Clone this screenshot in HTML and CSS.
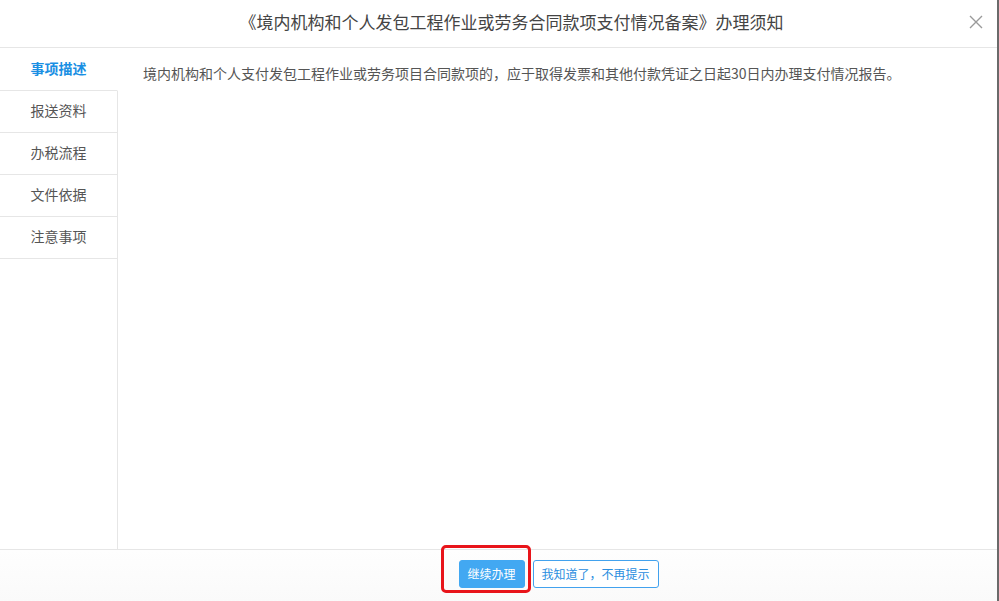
FILE: index.html
```html
<!DOCTYPE html>
<html lang="zh-CN">
<head>
<meta charset="utf-8">
<title>办理须知</title>
<link rel="stylesheet" href="styles.css">
</head>
<body>
<div class="modal">
  <div class="header">
    <div class="title">《境内机构和个人发包工程作业或劳务合同款项支付情况备案》办理须知</div>
    <span class="close" aria-label="关闭">
      <svg width="14" height="14" viewBox="0 0 14 14"><path d="M1 1L13 13M13 1L1 13" stroke="#9a9a9a" stroke-width="1.4" fill="none"/></svg>
    </span>
  </div>
  <div class="body">
    <div class="sidebar">
      <div class="tab active">事项描述</div>
      <div class="tab">报送资料</div>
      <div class="tab">办税流程</div>
      <div class="tab">文件依据</div>
      <div class="tab">注意事项</div>
      <div class="filler"></div>
    </div>
    <div class="content">境内机构和个人支付发包工程作业或劳务项目合同款项的，应于取得发票和其他付款凭证之日起30日内办理支付情况报告。</div>
  </div>
  <div class="footer">
    <div class="actions">
      <button class="btn primary">继续办理</button>
      <button class="btn outline">我知道了，不再提示</button>
      <span class="highlight"></span>
    </div>
  </div>
</div>
</body>
</html>
```

FILE: styles.css
```css
* { box-sizing: border-box; }
html, body { margin: 0; padding: 0; background: #fff; }
body {
  font-family: "Noto Sans CJK SC", "Noto Sans", sans-serif;
  color: #555;
}
.modal {
  width: 999px;
  height: 601px;
  display: flex;
  flex-direction: column;
  border-right: 2px solid #6a6a6a;
  background: #fff;
}
.header {
  height: 48px;
  border-bottom: 1px solid #e6e6e6;
  display: flex;
  align-items: center;
  justify-content: center;
  position: relative;
  padding-left: 26px;
  padding-bottom: 4px;
}
.title {
  font-size: 17px;
  color: #444;
  line-height: 22px;
}
.close {
  position: absolute;
  right: 14px;
  top: 15px;
  width: 14px;
  height: 14px;
  display: block;
}
.close svg { display: block; }
.body {
  flex: 1;
  display: flex;
  min-height: 0;
}
.sidebar {
  width: 118px;
  display: flex;
  flex-direction: column;
  padding-top: 1px;
}
.tab {
  height: 42px;
  border-bottom: 1px solid #e6e6e6;
  border-right: 1px solid #e6e6e6;
  font-size: 14px;
  color: #555;
  display: flex;
  align-items: center;
  justify-content: center;
  padding-bottom: 4px;
}
.tab.active {
  color: #1a8fe3;
  font-weight: bold;
  border-right-color: transparent;
}
.filler {
  flex: 1;
  border-right: 1px solid #e6e6e6;
}
.content {
  flex: 1;
  padding: 14px 0 0 25px;
  font-size: 14px;
  line-height: 22px;
  color: #555;
}
.footer {
  height: 52px;
  border-top: 1px solid #e6e6e6;
  background: linear-gradient(#fefefe, #fafafa);
  display: flex;
  align-items: center;
  justify-content: center;
  padding-left: 120px;
  padding-bottom: 4px;
}
.actions {
  display: flex;
  gap: 8px;
  position: relative;
}
.btn {
  height: 28px;
  font-family: inherit;
  font-size: 12px;
  border-radius: 3px;
  padding: 0;
  cursor: pointer;
  line-height: 26px;
  white-space: nowrap;
  text-align: center;
}
.btn.primary {
  width: 66px;
  background: #42a8f2;
  border: 1px solid #42a8f2;
  color: #fff;
}
.btn.outline {
  width: 126px;
  background: #fff;
  border: 1px solid #42a2ee;
  color: #2a8ee0;
}
.highlight {
  position: absolute;
  left: -18px;
  top: -15px;
  width: 90px;
  height: 48px;
  border: 3px solid #e8141a;
  border-radius: 5px;
  pointer-events: none;
}
```
